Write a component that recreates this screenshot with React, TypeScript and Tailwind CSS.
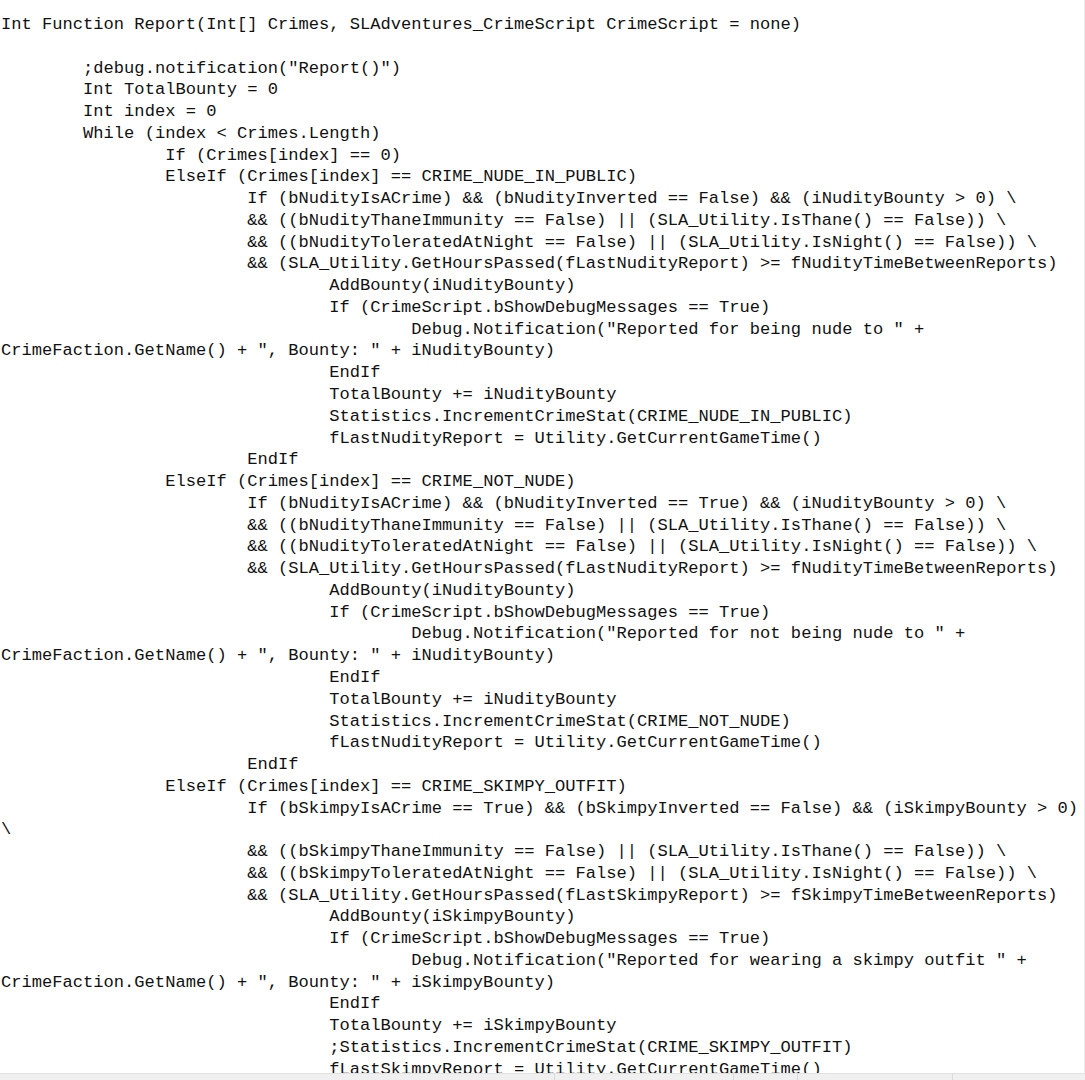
const code = `Int Function Report(Int[] Crimes, SLAdventures_CrimeScript CrimeScript = none)

\t;debug.notification("Report()")
\tInt TotalBounty = 0
\tInt index = 0
\tWhile (index < Crimes.Length)
\t\tIf (Crimes[index] == 0)
\t\tElseIf (Crimes[index] == CRIME_NUDE_IN_PUBLIC)
\t\t\tIf (bNudityIsACrime) && (bNudityInverted == False) && (iNudityBounty > 0) \\
\t\t\t&& ((bNudityThaneImmunity == False) || (SLA_Utility.IsThane() == False)) \\
\t\t\t&& ((bNudityToleratedAtNight == False) || (SLA_Utility.IsNight() == False)) \\
\t\t\t&& (SLA_Utility.GetHoursPassed(fLastNudityReport) >= fNudityTimeBetweenReports)
\t\t\t\tAddBounty(iNudityBounty)
\t\t\t\tIf (CrimeScript.bShowDebugMessages == True)
\t\t\t\t\tDebug.Notification("Reported for being nude to " +
CrimeFaction.GetName() + ", Bounty: " + iNudityBounty)
\t\t\t\tEndIf
\t\t\t\tTotalBounty += iNudityBounty
\t\t\t\tStatistics.IncrementCrimeStat(CRIME_NUDE_IN_PUBLIC)
\t\t\t\tfLastNudityReport = Utility.GetCurrentGameTime()
\t\t\tEndIf
\t\tElseIf (Crimes[index] == CRIME_NOT_NUDE)
\t\t\tIf (bNudityIsACrime) && (bNudityInverted == True) && (iNudityBounty > 0) \\
\t\t\t&& ((bNudityThaneImmunity == False) || (SLA_Utility.IsThane() == False)) \\
\t\t\t&& ((bNudityToleratedAtNight == False) || (SLA_Utility.IsNight() == False)) \\
\t\t\t&& (SLA_Utility.GetHoursPassed(fLastNudityReport) >= fNudityTimeBetweenReports)
\t\t\t\tAddBounty(iNudityBounty)
\t\t\t\tIf (CrimeScript.bShowDebugMessages == True)
\t\t\t\t\tDebug.Notification("Reported for not being nude to " +
CrimeFaction.GetName() + ", Bounty: " + iNudityBounty)
\t\t\t\tEndIf
\t\t\t\tTotalBounty += iNudityBounty
\t\t\t\tStatistics.IncrementCrimeStat(CRIME_NOT_NUDE)
\t\t\t\tfLastNudityReport = Utility.GetCurrentGameTime()
\t\t\tEndIf
\t\tElseIf (Crimes[index] == CRIME_SKIMPY_OUTFIT)
\t\t\tIf (bSkimpyIsACrime == True) && (bSkimpyInverted == False) && (iSkimpyBounty > 0)
\\
\t\t\t&& ((bSkimpyThaneImmunity == False) || (SLA_Utility.IsThane() == False)) \\
\t\t\t&& ((bSkimpyToleratedAtNight == False) || (SLA_Utility.IsNight() == False)) \\
\t\t\t&& (SLA_Utility.GetHoursPassed(fLastSkimpyReport) >= fSkimpyTimeBetweenReports)
\t\t\t\tAddBounty(iSkimpyBounty)
\t\t\t\tIf (CrimeScript.bShowDebugMessages == True)
\t\t\t\t\tDebug.Notification("Reported for wearing a skimpy outfit " +
CrimeFaction.GetName() + ", Bounty: " + iSkimpyBounty)
\t\t\t\tEndIf
\t\t\t\tTotalBounty += iSkimpyBounty
\t\t\t\t;Statistics.IncrementCrimeStat(CRIME_SKIMPY_OUTFIT)
\t\t\t\tfLastSkimpyReport = Utility.GetCurrentGameTime()
\t\t\tEndIf`;

export default function App() {
  const lines = code.split("\n");

  return (
    <main className="h-screen w-full bg-white flex flex-col overflow-hidden">
      <div className="flex-1 overflow-hidden border-r border-[#ececec] pt-[14px] pl-[1px]">
        {lines.map((line, i) => (
          <div
            key={i}
            className="whitespace-pre [tab-size:8] font-['Liberation_Mono',monospace] text-[17.1px] leading-[21.77px] text-[#111] h-[21.77px]"
          >
            {line || " "}
          </div>
        ))}
      </div>

      {/* status bar */}
      <div className="h-[7px] shrink-0 flex bg-[#f0f0f0] border-t border-[#e2e2e2]">
        <div className="w-[554px]" />
        <div className="w-[179px] border-l border-[#dadada]" />
        <div className="w-[64px] border-l border-[#dadada]" />
        <div className="w-[155px] border-l border-[#dadada]" />
        <div className="flex-1 border-l border-[#dadada]" />
      </div>
    </main>
  );
}
